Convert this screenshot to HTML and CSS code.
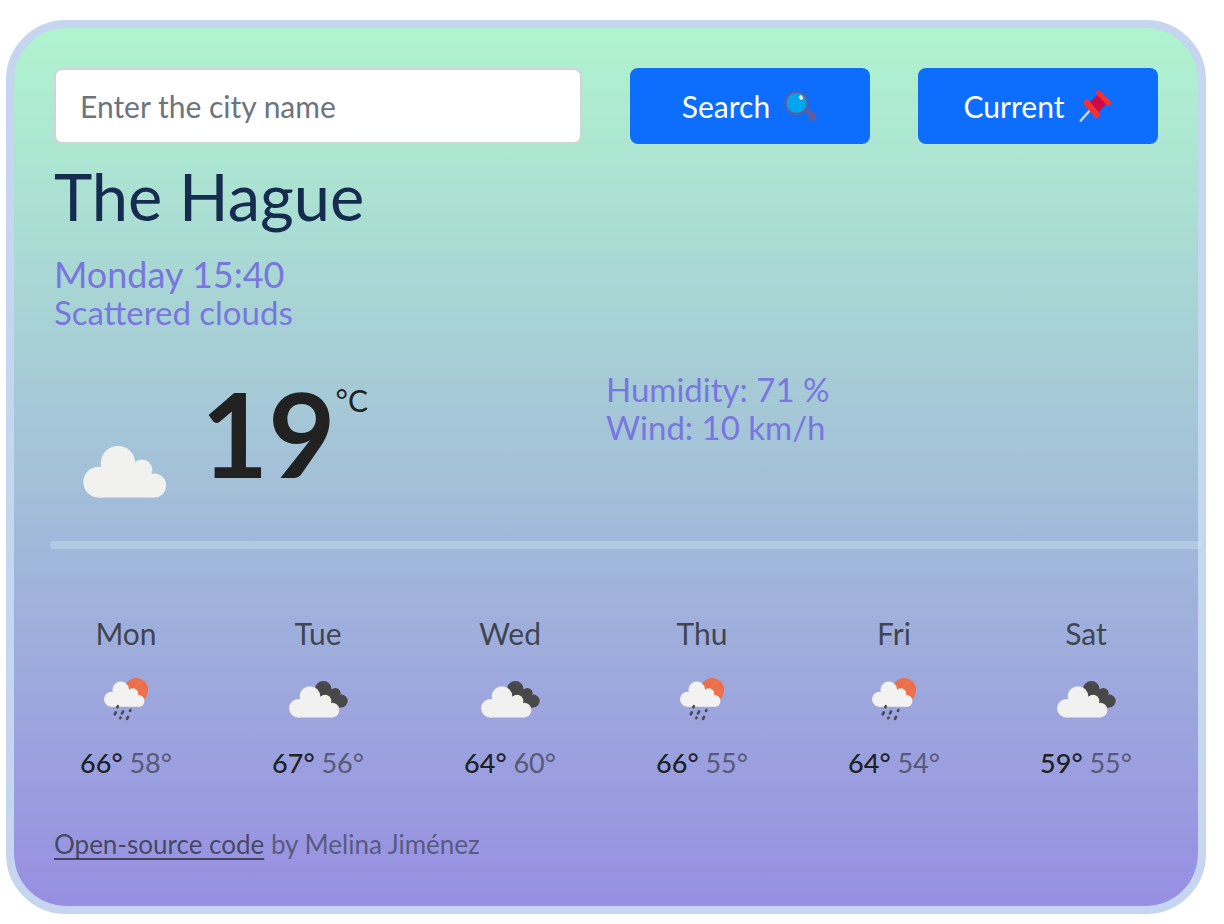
FILE: index.html
```html
<!DOCTYPE html>
<html lang="en">
<head>
<meta charset="utf-8">
<meta name="viewport" content="width=device-width, initial-scale=1">
<title>Weather</title>
<link rel="stylesheet" href="styles.css">
</head>
<body>
<svg class="symbols" aria-hidden="true">
  <symbol id="rain" viewBox="1 0 60 55">
    <circle cx="41.200" cy="20" r="12" fill="#ee6f4c"/>
    <g fill="#f2f2f2">
      <circle cx="16.500" cy="29.300" r="7.500"/>
      <circle cx="25.800" cy="19.900" r="8.300"/>
      <circle cx="37.700" cy="24" r="5.700"/>
      <circle cx="43.600" cy="31" r="5.900"/>
      <path d="M16.500 23h25v13.800h-25z"/>
    </g>
    <path d="M22.800 36.200l-.400 1M20.800 42.300l-1 2M28 41.500l-1 2M35.400 40l-.400.800M25.600 47.500l-.400.600M33 46.800l-1 2" stroke="#484848" stroke-width="2.600" stroke-linecap="round"/>
  </symbol>
  <symbol id="broken" viewBox="-2 0 80 55">
    <g fill="#484848">
      <circle cx="43.300" cy="19.500" r="8.400"/>
      <circle cx="55.300" cy="23.300" r="5.300"/>
      <circle cx="61.300" cy="31" r="6.400"/>
      <path d="M43 22h14l4 15.400H46z"/>
    </g>
    <g fill="#f1f1ef">
      <circle cx="18.300" cy="38.300" r="9.200"/>
      <circle cx="30" cy="26.600" r="10.300"/>
      <circle cx="45" cy="31" r="6.300"/>
      <circle cx="52" cy="40.100" r="7.400"/>
      <path d="M18.300 31H49l3 16.500H18.300z"/>
    </g>
  </symbol>
  <symbol id="cloud" viewBox="0 0 84 52">
    <g fill="#f1f1ef">
      <circle cx="15.700" cy="36.100" r="15.400"/>
      <circle cx="35" cy="17.300" r="17.300"/>
      <circle cx="59" cy="24" r="10.400"/>
      <circle cx="71.200" cy="39.500" r="12"/>
      <path d="M15.700 22H66l5.200 29.500H15.700z"/>
    </g>
  </symbol>
</svg>
<main class="card">
  <form class="search">
    <input class="field" type="text" placeholder="Enter the city name" aria-label="City name">
    <button class="btn" type="button">Search
      <svg class="btn-icon" viewBox="0 0 34 34" aria-hidden="true">
        <path d="M21 22l3-3 7.500 6.500a4 4 0 0 1-5 6z" fill="#625b9d"/>
        <circle cx="12.500" cy="14" r="11" fill="#00a6ed" stroke="#625b9d" stroke-width="2"/>
        <ellipse cx="17" cy="8.500" rx="1.800" ry="2.300" fill="#fff" transform="rotate(-20 17 8.500)"/>
      </svg>
    </button>
    <button class="btn" type="button">Current
      <svg class="btn-icon" viewBox="0 0 34 34" aria-hidden="true">
        <path d="M2.800 31.500L14 19" stroke="#d3d3d3" stroke-width="2.600" stroke-linecap="round"/>
        <path d="M11 14l9-9 9 9-8 9z" fill="#ca0b4a"/>
        <path d="M8.500 13.500L19 26" stroke="#f8312f" stroke-width="6" stroke-linecap="round"/>
        <path d="M20.500 3.800L30.500 14" stroke="#f8312f" stroke-width="5" stroke-linecap="round"/>
      </svg>
    </button>
  </form>

  <h1 class="city">The Hague</h1>
  <p class="time">Monday 15:40</p>
  <p class="sky">Scattered clouds</p>

  <section class="now">
    <div class="reading">
      <svg class="now-icon" aria-hidden="true"><use href="#cloud"/></svg>
      <strong class="degrees">19</strong>
      <span class="unit">°C</span>
    </div>
    <div class="details">
      <p>Humidity: 71 %</p>
      <p>Wind: 10 km/h</p>
    </div>
  </section>

  <hr class="rule">

  <section class="forecast">
    <div class="day"><span class="name">Mon</span><svg class="icon" aria-hidden="true"><use href="#rain"/></svg><p class="temps">66° <span class="low">58°</span></p></div>
    <div class="day"><span class="name">Tue</span><svg class="icon" aria-hidden="true"><use href="#broken"/></svg><p class="temps">67° <span class="low">56°</span></p></div>
    <div class="day"><span class="name">Wed</span><svg class="icon" aria-hidden="true"><use href="#broken"/></svg><p class="temps">64° <span class="low">60°</span></p></div>
    <div class="day"><span class="name">Thu</span><svg class="icon" aria-hidden="true"><use href="#rain"/></svg><p class="temps">66° <span class="low">55°</span></p></div>
    <div class="day"><span class="name">Fri</span><svg class="icon" aria-hidden="true"><use href="#rain"/></svg><p class="temps">64° <span class="low">54°</span></p></div>
    <div class="day"><span class="name">Sat</span><svg class="icon" aria-hidden="true"><use href="#broken"/></svg><p class="temps">59° <span class="low">55°</span></p></div>
  </section>

  <footer class="credit"><a class="source" href="#">Open-source code</a> by Melina Jiménez</footer>
</main>
</body>
</html>
```
FILE: styles.css
```css
* { box-sizing: border-box; }
body {
  margin: 20px 18px 10px 6px;
  background: #fff;
  color: #212121;
  font-family: "Gill Sans MT", Lato, sans-serif;
}
p, h1 { margin: 0; font-weight: 400; }
.symbols { position: absolute; width: 0; height: 0; }
.card {
  border: 8px solid #c6d6f0;
  border-radius: 60px;
  padding: 40px;
  background: linear-gradient(#b0f4cf, #978fe2) padding-box, #c6d6f0;
}
.search {
  display: grid;
  grid-template-columns: 11fr 5fr 5fr;
  gap: 48px;
}
.field, .btn {
  width: 100%;
  height: 76px;
  border-radius: 8px;
  font: 400 30px/48px "Gill Sans MT", Lato, sans-serif;
}
.field {
  padding: 12px 24px;
  border: 2px solid #ced4da;
  background: #fff;
  color: #212529;
}
.field::placeholder { color: #6c757d; opacity: 1; }
.btn {
  display: flex;
  align-items: center;
  justify-content: center;
  gap: 14px;
  border: 0;
  background: #0d6efd;
  color: #fff;
}
.btn-icon { width: 34px; height: 34px; }
.city {
  margin-top: 12px;
  font-size: 65px;
  line-height: 80px;
  color: #152c4e;
}
.time, .sky, .details { color: #7a76e0; }
.time { margin-top: 18px; font-size: 36px; line-height: 40px; }
.sky { font-size: 33px; line-height: 36px; }
.now {
  display: grid;
  grid-template-columns: 1fr 1fr;
  margin-top: 40px;
}
.reading { display: flex; align-items: flex-start; padding-left: 29px; }
.now-icon { width: 84px; height: 52px; margin-top: 76px; }
.degrees {
  margin-left: 34px;
  font-size: 116px;
  line-height: 128px;
  font-weight: 700;
}
.unit { font-size: 30px; line-height: 60px; }
.details { font-size: 33px; line-height: 38px; }
.rule {
  height: 8px;
  margin: 43px -44px 64px -4px;
  border: 0;
  border-radius: 4px;
  background: rgba(203, 227, 238, 0.4);
  position: relative;
}
.forecast {
  display: grid;
  grid-template-columns: repeat(6, 1fr);
  margin: 0 -24px;
}
.day { display: flex; flex-direction: column; align-items: center; }
.name { font-size: 30px; line-height: 40px; color: rgba(33, 33, 33, 0.75); }
.icon { width: 80px; height: 55px; margin: 17px 0 18px; }
.temps { font-size: 27px; line-height: 40px; font-weight: 500; }
.low { font-weight: 400; opacity: 0.55; }
.credit {
  margin-top: 40px;
  font-size: 26px;
  line-height: 43px;
  color: rgba(33, 37, 41, 0.55);
}
.source { color: rgba(33, 37, 41, 0.7); text-underline-offset: 4px; }
```
